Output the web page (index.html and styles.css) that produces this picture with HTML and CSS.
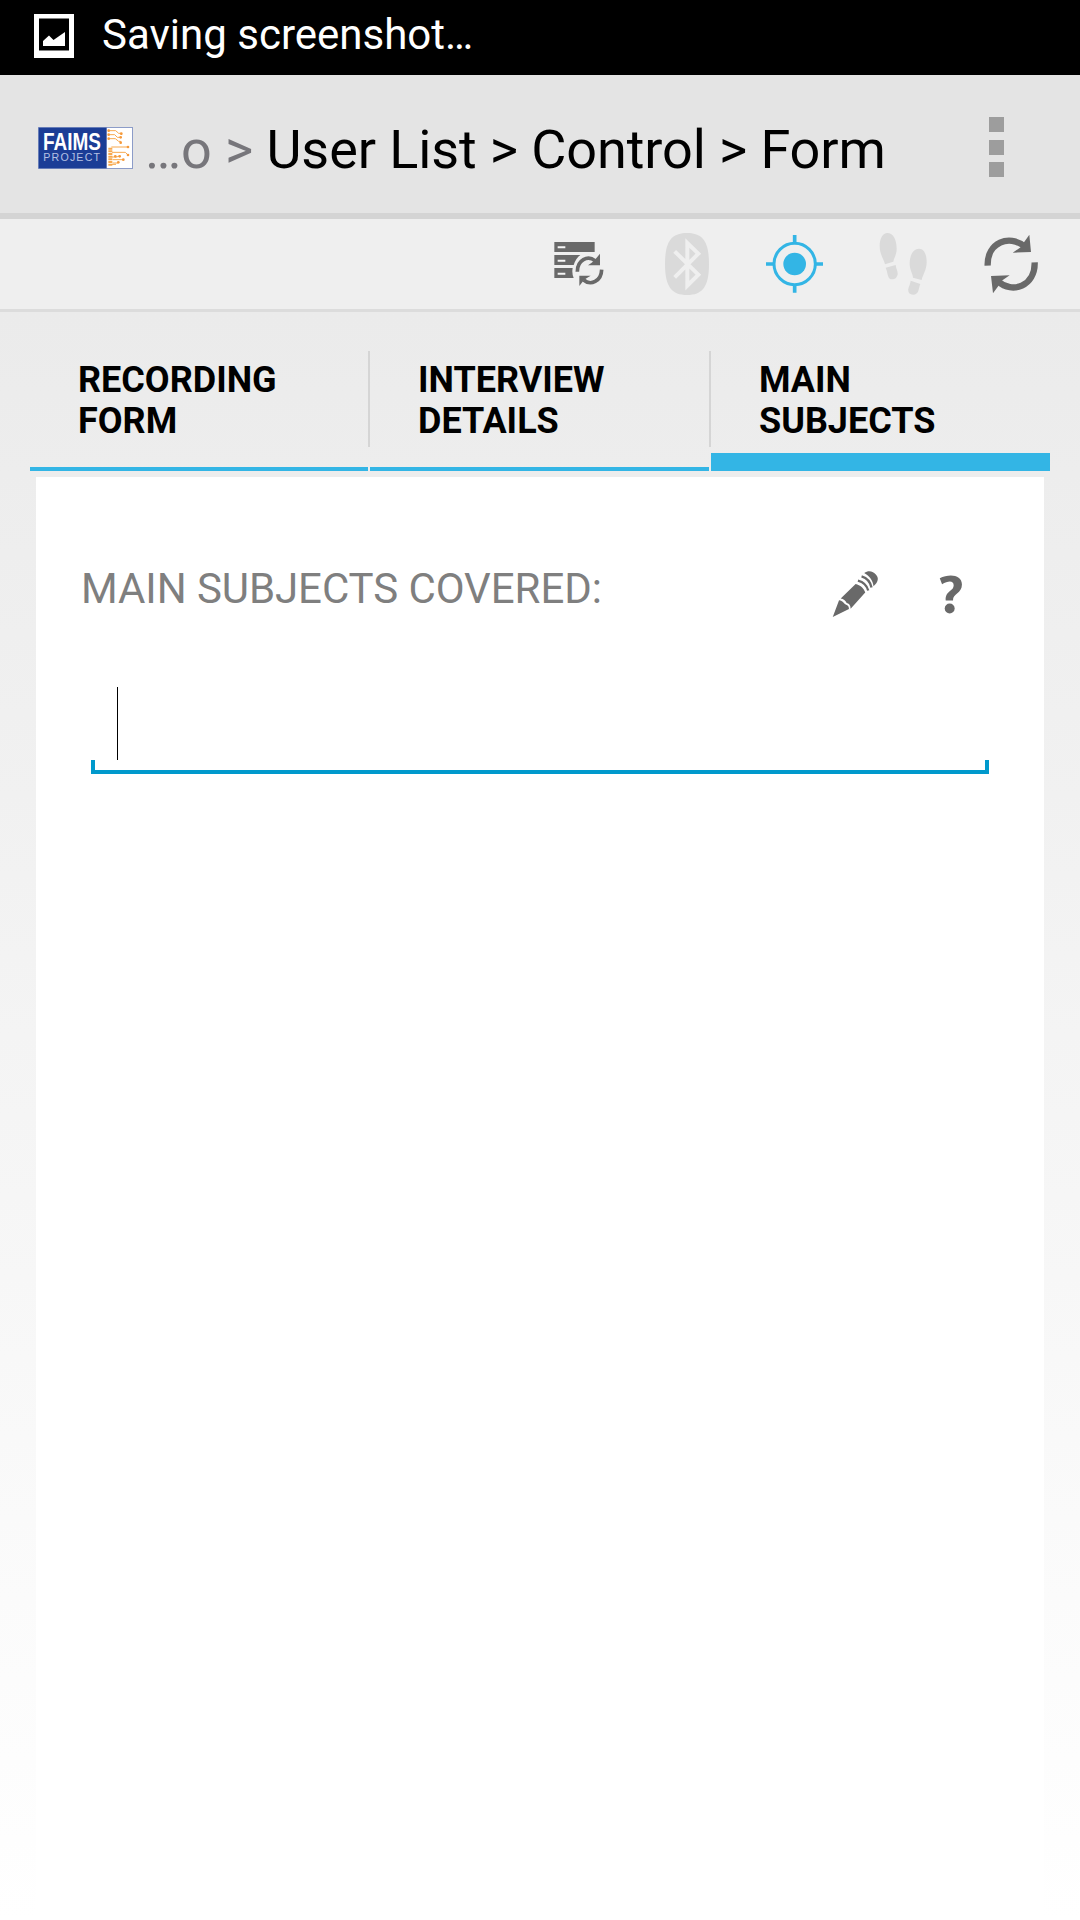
FILE: index.html
```html
<!DOCTYPE html>
<html lang="en">
<head>
<meta charset="utf-8">
<title>Form</title>
<link rel="stylesheet" href="styles.css">
</head>
<body>
<div class="screen">
  <div class="status">
    <svg class="status-icon" viewBox="0 0 40 44">
      <path fill="#fff" fill-rule="evenodd" d="M0 0H40V44H0ZM5 4.500V36.500H35V4.500Z"/>
      <path fill="#fff" d="M9 32V27L15 21.500L19.500 26L31 18V32Z"/>
    </svg>
    <span class="status-text">Saving screenshot…</span>
  </div>
  <header class="actionbar">
    <svg class="logo" viewBox="0 0 285 126">
      <rect x="1.500" y="1.500" width="282" height="123" fill="#fff" stroke="#8c9cc8" stroke-width="3"/>
      <rect x="2" y="2" width="204" height="122" fill="#1b3d96"/>
      <text class="logo-name" x="15" y="68" textLength="174" lengthAdjust="spacingAndGlyphs">FAIMS</text>
      <text class="logo-sub" x="16" y="103" textLength="170">PROJECT</text>
      <g fill="none" stroke="#f7a94f" stroke-width="3">
        <path d="M212 11H233L242 19H250V24M212 23H230L238 31H246M212 35H232L242 43H248V50M220 60H270M222 76H262L270 84M222 90H236L246 86M224 98H256M224 108H240M222 112H234"/>
        <path stroke-width="12" stroke-dasharray="6 2" d="M217 62V116"/>
      </g>
      <g fill="#f5993a">
        <circle cx="212" cy="11" r="4"/><circle cx="212" cy="23" r="4"/><circle cx="212" cy="35" r="4"/>
        <circle cx="250" cy="20" r="4"/><circle cx="248" cy="31" r="4"/><circle cx="248" cy="47" r="4"/>
        <circle cx="270" cy="60" r="4"/><circle cx="270" cy="84" r="4"/><circle cx="256" cy="98" r="4"/>
        <circle cx="232" cy="88" r="4"/><circle cx="245" cy="88" r="4"/><circle cx="241" cy="106" r="4"/>
      </g>
    </svg>
    <div class="crumbs"><span class="crumbs-dim">…o &gt; </span>User List &gt; Control &gt; Form</div>
    <div class="overflow"><i class="dot"></i><i class="dot"></i><i class="dot"></i></div>
  </header>
  <div class="tools">
    <svg class="tool" viewBox="-48 -3 324 270">
      <g fill="#696969"><path d="M43 66H164V96H43ZM43 105H121Q108 114 101 135H43ZM43 144H98Q95 160 101 174H43Z"/>
      <path d="M180 101V136H144L155 128L163 121L170 113ZM118 198V167H152L137 176L129 184Z"/></g>
      <g fill="none" stroke="#f6f6f6" stroke-width="6"><path d="M53 82H76M53 122H76M53 161H76"/></g>
      <g fill="none" stroke="#696969" stroke-width="11"><path d="M112 155C112 120 143 105 165 122M185 149C184 184 152 198 131 180"/></g>
    </svg>
    <svg class="tool" viewBox="276 -3 324 270">
      <path fill="#dadada" d="M441 39C486 39 507 62 507 132S486 225 441 225S375 202 375 132S396 39 441 39Z"/>
      <path fill="none" stroke="#efefef" stroke-width="12" d="M404 94L475 164L442 197V69L475 101L404 172"/>
    </svg>
    <svg class="tool" viewBox="0 -3 324 270">
      <g fill="none" stroke="#33b5e5"><circle cx="164" cy="132" r="62" stroke-width="9"/><path stroke-width="11" d="M164 45V71M164 193V218M78 132H102M226 132H249"/></g>
      <circle cx="164" cy="132" r="34" fill="#33b5e5"/>
    </svg>
    <svg class="tool" viewBox="324 -3 324 270">
      <path fill="#dadada" d="M442 39C460 39 470 59 470 86C470 103 463 111 460 125L435 133C432 119 419 103 419 78C419 55 429 39 442 39ZM437 143L467 135C468 147 474 153 473 163C471 174 464 178 457 178C441 178 445 160 437 143ZM537 86C552 86 560 102 560 127C560 150 548 165 545 180L519 173C518 158 509 151 509 131C509 105 520 86 537 86ZM512 182L541 192C535 205 538 224 519 224C509 224 503 218 505 206C507 198 511 192 512 182Z"/>
    </svg>
    <svg class="tool" viewBox="648 -3 324 270">
      <path fill="none" stroke="#696969" stroke-width="19" d="M743 137C741 67 808 42 853 79M884 127C886 199 816 222 775 185"/>
      <path fill="#696969" d="M868 44L873 96L818 98L842 82L851 68ZM753 168L809 166L783 184L775 198L759 220Z"/>
    </svg>
  </div>
  <main class="content">
    <nav class="tabs">
      <div class="tab"><span class="tab-label">RECORDING<br>FORM</span></div>
      <div class="tab"><span class="tab-label">INTERVIEW<br>DETAILS</span></div>
      <div class="tab tab-on"><span class="tab-label">MAIN<br>SUBJECTS</span></div>
    </nav>
    <section class="card">
      <div class="field-head">
        <span class="field-label">MAIN SUBJECTS COVERED:</span>
        <svg class="field-icons" viewBox="90 80 420 160">
          <g fill="#696969"><path d="M97 231L116 180C128 181 130 190 136 193C143 195 146 199 146 207ZM121 175L166 131C180 134 191 144 195 157L151 206C151 195 145 190 139 189C135 181 130 176 121 175Z"/>
          <path d="M192 98C207 88 220 95 227 103C236 112 236 125 220 138C218 119 208 108 192 98Z"/></g>
          <g fill="none" stroke="#696969" stroke-width="7"><path d="M184 108C200 113 211 126 214 142M173 121C188 125 200 135 204 151"/></g>
          <path fill="#696969" d="M420 114C449 99 487 103 487 133C487 160 459 160 460 181H438C436 151 462 154 462 135C462 120 445 121 427 132Z"/>
          <circle cx="450" cy="205" r="15" fill="#696969"/>
        </svg>
      </div>
      <div class="input"><i class="caret"></i></div>
    </section>
  </main>
</div>
</body>
</html>
```
FILE: styles.css
```css
* { box-sizing: border-box; }
body { margin: 0; font-family: Roboto, sans-serif; color: #000; }
svg { display: block; flex: none; }
.screen { width: 1080px; height: 1920px; display: flex; flex-direction: column; overflow: hidden; }
.status { height: 75px; background: #000; color: #fff; display: flex; align-items: flex-start; padding: 14px 0 0 34px; gap: 28px; }
.status-icon { width: 40px; height: 44px; }
.status-text { font-size: 42px; line-height: 50px; margin-top: -4px; white-space: nowrap; }
.actionbar { height: 144px; background: #e4e4e4; border-bottom: 6px solid #d4d4d4; display: flex; align-items: center; padding: 0 72px 0 38px; }
.logo { width: 95px; height: 42px; margin-top: 7px; }
.logo-name { font: bold 70px "Liberation Sans", sans-serif; fill: #fff; }
.logo-sub { font: 32px "Liberation Sans", sans-serif; fill: #b4c0e4; }
.crumbs { font-size: 54px; line-height: 64px; letter-spacing: -0.1px; margin: 11px 0 0 12px; white-space: nowrap; }
.crumbs-dim { color: #77767b; }
.overflow { display: flex; flex-direction: column; justify-content: space-between; height: 60px; margin: 18px 4px 0 auto; align-self: flex-start; margin-top: 42px; }
.dot { width: 15px; height: 15px; background: #9d9d9d; }
.tools { height: 93px; background: #efefef; border-bottom: 3px solid #dcdcdc; display: flex; justify-content: flex-end; padding-right: 16px; }
.tool { width: 108px; height: 90px; }
.content { flex: 1; display: flex; flex-direction: column; padding: 39px 30px 0; background: linear-gradient(#ebebeb, #fff); }
.tabs { display: grid; grid-template-columns: 338px 339px 339px; gap: 2px; height: 120px; }
.tab { border-bottom: 4px solid #33b5e5; padding: 9px 0 0 48px; position: relative; }
.tab + .tab::before { content: ""; position: absolute; left: -2px; top: 0; width: 2px; height: 96px; background: #d5d5d5; }
.tab-on { border-bottom-width: 18px; }
.tab-label { font-size: 36px; font-weight: 700; line-height: 41px; }
.card { flex: 1; margin: 6px 6px 0; background: #fff; }
.field-head { display: flex; justify-content: space-between; height: 189px; padding: 83px 74px 0 45px; }
.field-label { font-size: 42px; line-height: 58px; letter-spacing: -0.07px; color: #7f7f7f; white-space: nowrap; }
.field-icons { width: 140px; height: 53px; margin-top: 7px; }
.input { height: 108px; margin: 0 55px; display: flex; align-items: flex-start; padding: 21px 0 0 26px; border-bottom: 4px solid #0099cc; position: relative; }
.input::before, .input::after { content: ""; position: absolute; bottom: 0; width: 4px; height: 10px; background: #0099cc; }
.input::before { left: 0; }
.input::after { right: 0; }
.caret { width: 1px; height: 73px; background: #000; }
```
